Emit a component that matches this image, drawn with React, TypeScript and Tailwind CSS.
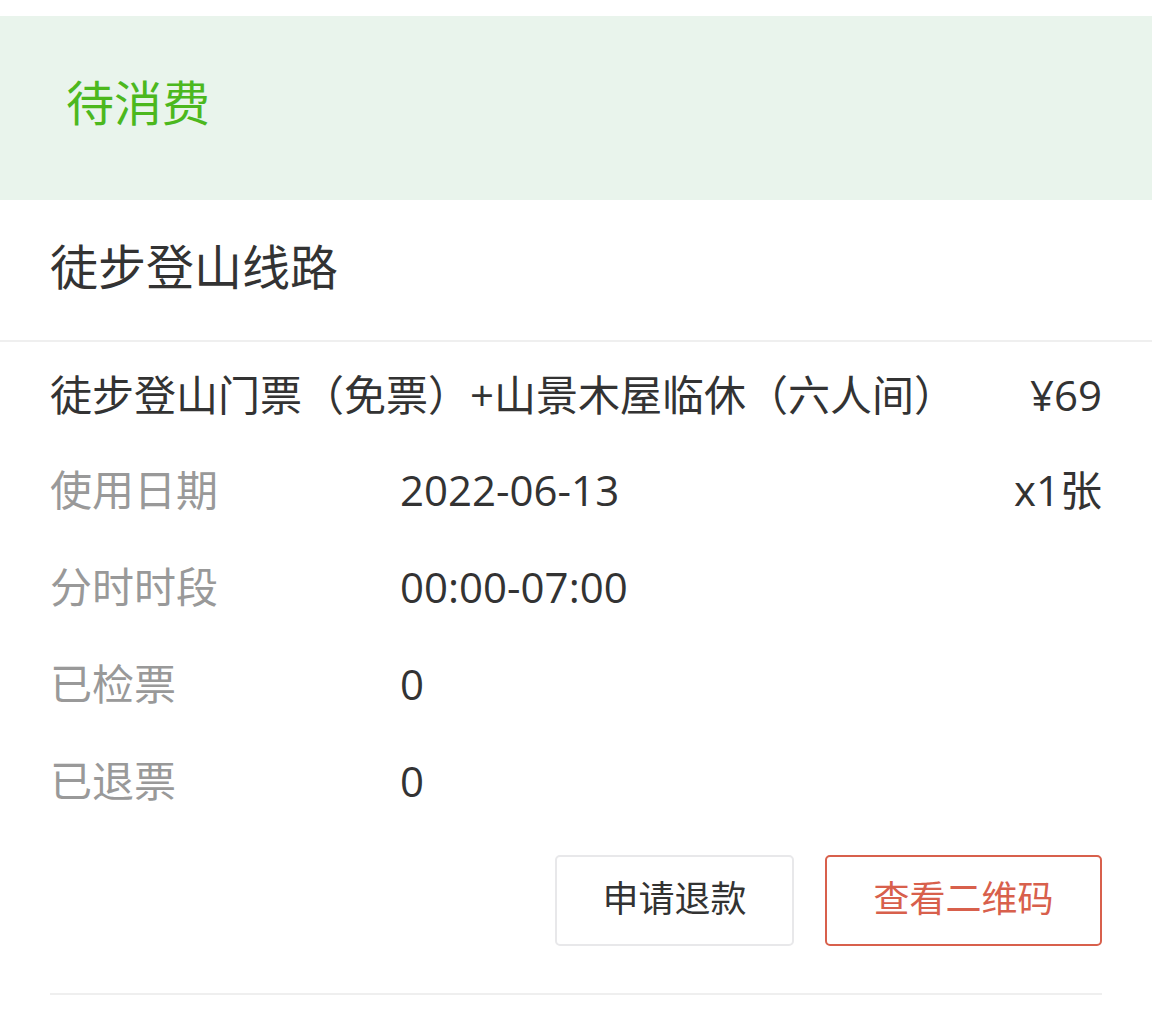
const rows = [
  { label: '使用日期', value: '2022-06-13', extra: 'x1张' },
  { label: '分时时段', value: '00:00-07:00' },
  { label: '已检票', value: '0' },
  { label: '已退票', value: '0' },
]

export default function App() {
  return (
    <div className="min-h-[1011px] w-[1152px] bg-white pt-4 font-['Open_Sans','Noto_Sans_CJK_SC',sans-serif] text-[#333]">
      {/* Status band */}
      <div className="flex h-[184px] items-center bg-[#e9f4ec] px-[66px] pb-[10px]">
        <span className="text-[48px] leading-none text-[#4cb81e]">待消费</span>
      </div>

      {/* Route title */}
      <div className="flex h-[142px] items-center border-b-2 border-[#efefef] px-[50px] pb-[6px]">
        <span className="text-[48px] leading-none">徒步登山线路</span>
      </div>

      {/* Ticket detail */}
      <div className="px-[50px]">
        <div className="flex h-[101px] items-center justify-between pt-[4px] text-[42px] leading-none">
          <span>徒步登山门票（免票）+山景木屋临休（六人间）</span>
          <span>¥69</span>
        </div>
        {rows.map((row) => (
          <div key={row.label} className="flex h-[97px] items-center pb-[4px] text-[42px] leading-none">
            <span className="w-[350px] text-[#999]">{row.label}</span>
            <span className="flex-1">{row.value}</span>
            {row.extra && <span>{row.extra}</span>}
          </div>
        ))}

        <div className="mt-[24px] flex justify-end gap-[31px]">
          <button className="flex h-[91px] w-[239px] items-center justify-center rounded-[5px] border-2 border-[#e8e8ea] pb-[4px] text-[36px] text-[#333]">
            申请退款
          </button>
          <button className="flex h-[91px] w-[277px] items-center justify-center rounded-[5px] border-2 border-[#d8604c] pb-[4px] text-[36px] text-[#d8604c]">
            查看二维码
          </button>
        </div>

        <div className="mt-[47px] border-b-2 border-[#efefef]" />
      </div>
    </div>
  )
}
